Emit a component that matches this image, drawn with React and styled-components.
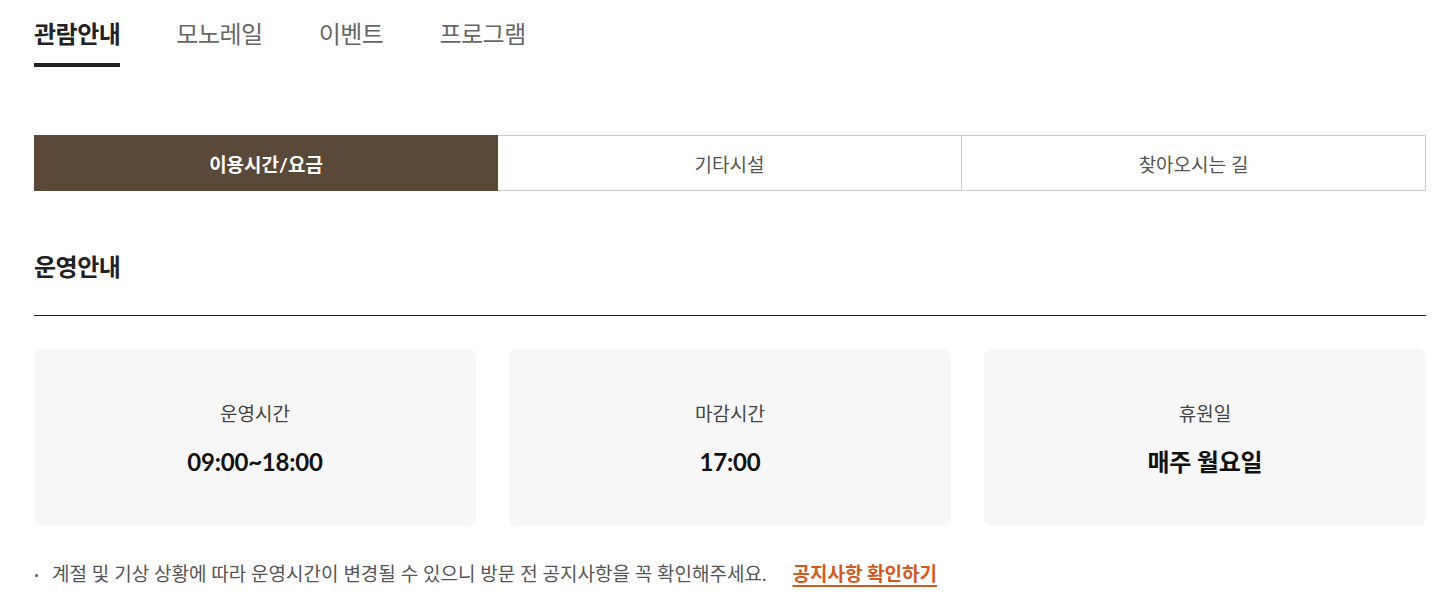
import { useState } from 'react';
import styled, { createGlobalStyle } from 'styled-components';

const GlobalStyle = createGlobalStyle`
  * { box-sizing: border-box; }
  body {
    margin: 0;
    background: #fff;
    font-family: 'Lato', 'Noto Sans CJK KR', sans-serif;
    color: #222;
  }
`;

const Page = styled.div`
  padding: 17px 28px 0 34px;
`;

const MainTabs = styled.ul`
  display: flex;
  gap: 56px;
  margin: 0;
  padding: 0;
  list-style: none;
`;

const MainTab = styled.li`
  font-size: 24px;
  line-height: 34px;
  letter-spacing: -0.5px;
  padding-bottom: 12px;
  font-weight: ${({ $active }) => ($active ? 700 : 400)};
  color: ${({ $active }) => ($active ? '#222' : '#666')};
  border-bottom: 4px solid ${({ $active }) => ($active ? '#222' : 'transparent')};
  cursor: pointer;
`;

const SubTabs = styled.div`
  display: grid;
  grid-template-columns: repeat(3, 1fr);
  margin-top: 68px;
`;

const SubTab = styled.button`
  height: 56px;
  font-family: inherit;
  font-size: 19px;
  border: 1px solid ${({ $active }) => ($active ? '#5a4838' : '#ccc')};
  border-left-width: ${({ $first }) => ($first ? '1px' : '0')};
  background: ${({ $active }) => ($active ? '#5a4838' : '#fff')};
  color: ${({ $active }) => ($active ? '#fff' : '#555')};
  font-weight: ${({ $active }) => ($active ? 700 : 400)};
  cursor: pointer;
`;

const SectionTitle = styled.h2`
  margin: 59px 0 0;
  padding-bottom: 31px;
  font-size: 24px;
  line-height: 34px;
  font-weight: 700;
  letter-spacing: -0.5px;
  border-bottom: 1px solid #222;
`;

const Cards = styled.div`
  display: grid;
  grid-template-columns: repeat(3, 1fr);
  gap: 33px;
  margin-top: 33px;
`;

const Card = styled.div`
  height: 177px;
  border-radius: 8px;
  background: #f7f7f7;
  display: flex;
  flex-direction: column;
  align-items: center;
  justify-content: center;
  gap: 17px;
  padding-top: 4px;
`;

const Label = styled.span`
  font-size: 19px;
  line-height: 28px;
  color: #444;
`;

const Value = styled.strong`
  font-size: 24px;
  line-height: 34px;
  font-weight: 700;
  color: #111;
  letter-spacing: -0.2px;
`;

const Note = styled.p`
  display: flex;
  align-items: center;
  margin: 34px 0 0;
  font-size: 19px;
  line-height: 28px;
  color: #555;

  &::before {
    content: '·';
    width: 18px;
    color: #555;
  }
`;

const NoticeLink = styled.a`
  margin-left: 26px;
  font-size: 19px;
  font-weight: 700;
  color: #d35a1e;
  text-decoration: underline;
  text-underline-offset: 4px;
  text-decoration-thickness: 2px;
  cursor: pointer;
`;

const mainTabs = ['관람안내', '모노레일', '이벤트', '프로그램'];
const subTabs = ['이용시간/요금', '기타시설', '찾아오시는 길'];
const infos = [
  { label: '운영시간', value: '09:00~18:00' },
  { label: '마감시간', value: '17:00' },
  { label: '휴원일', value: '매주 월요일' },
];

export default function App() {
  const [main, setMain] = useState(0);
  const [sub, setSub] = useState(0);

  return (
    <>
      <GlobalStyle />
      <Page>
        <MainTabs>
          {mainTabs.map((t, i) => (
            <MainTab key={t} $active={main === i} onClick={() => setMain(i)}>
              {t}
            </MainTab>
          ))}
        </MainTabs>

        <SubTabs>
          {subTabs.map((t, i) => (
            <SubTab key={t} $first={i === 0} $active={sub === i} onClick={() => setSub(i)}>
              {t}
            </SubTab>
          ))}
        </SubTabs>

        <SectionTitle>운영안내</SectionTitle>

        <Cards>
          {infos.map((info) => (
            <Card key={info.label}>
              <Label>{info.label}</Label>
              <Value>{info.value}</Value>
            </Card>
          ))}
        </Cards>

        <Note>
          계절 및 기상 상황에 따라 운영시간이 변경될 수 있으니 방문 전 공지사항을 꼭 확인해주세요.
          <NoticeLink>공지사항 확인하기</NoticeLink>
        </Note>
      </Page>
    </>
  );
}
